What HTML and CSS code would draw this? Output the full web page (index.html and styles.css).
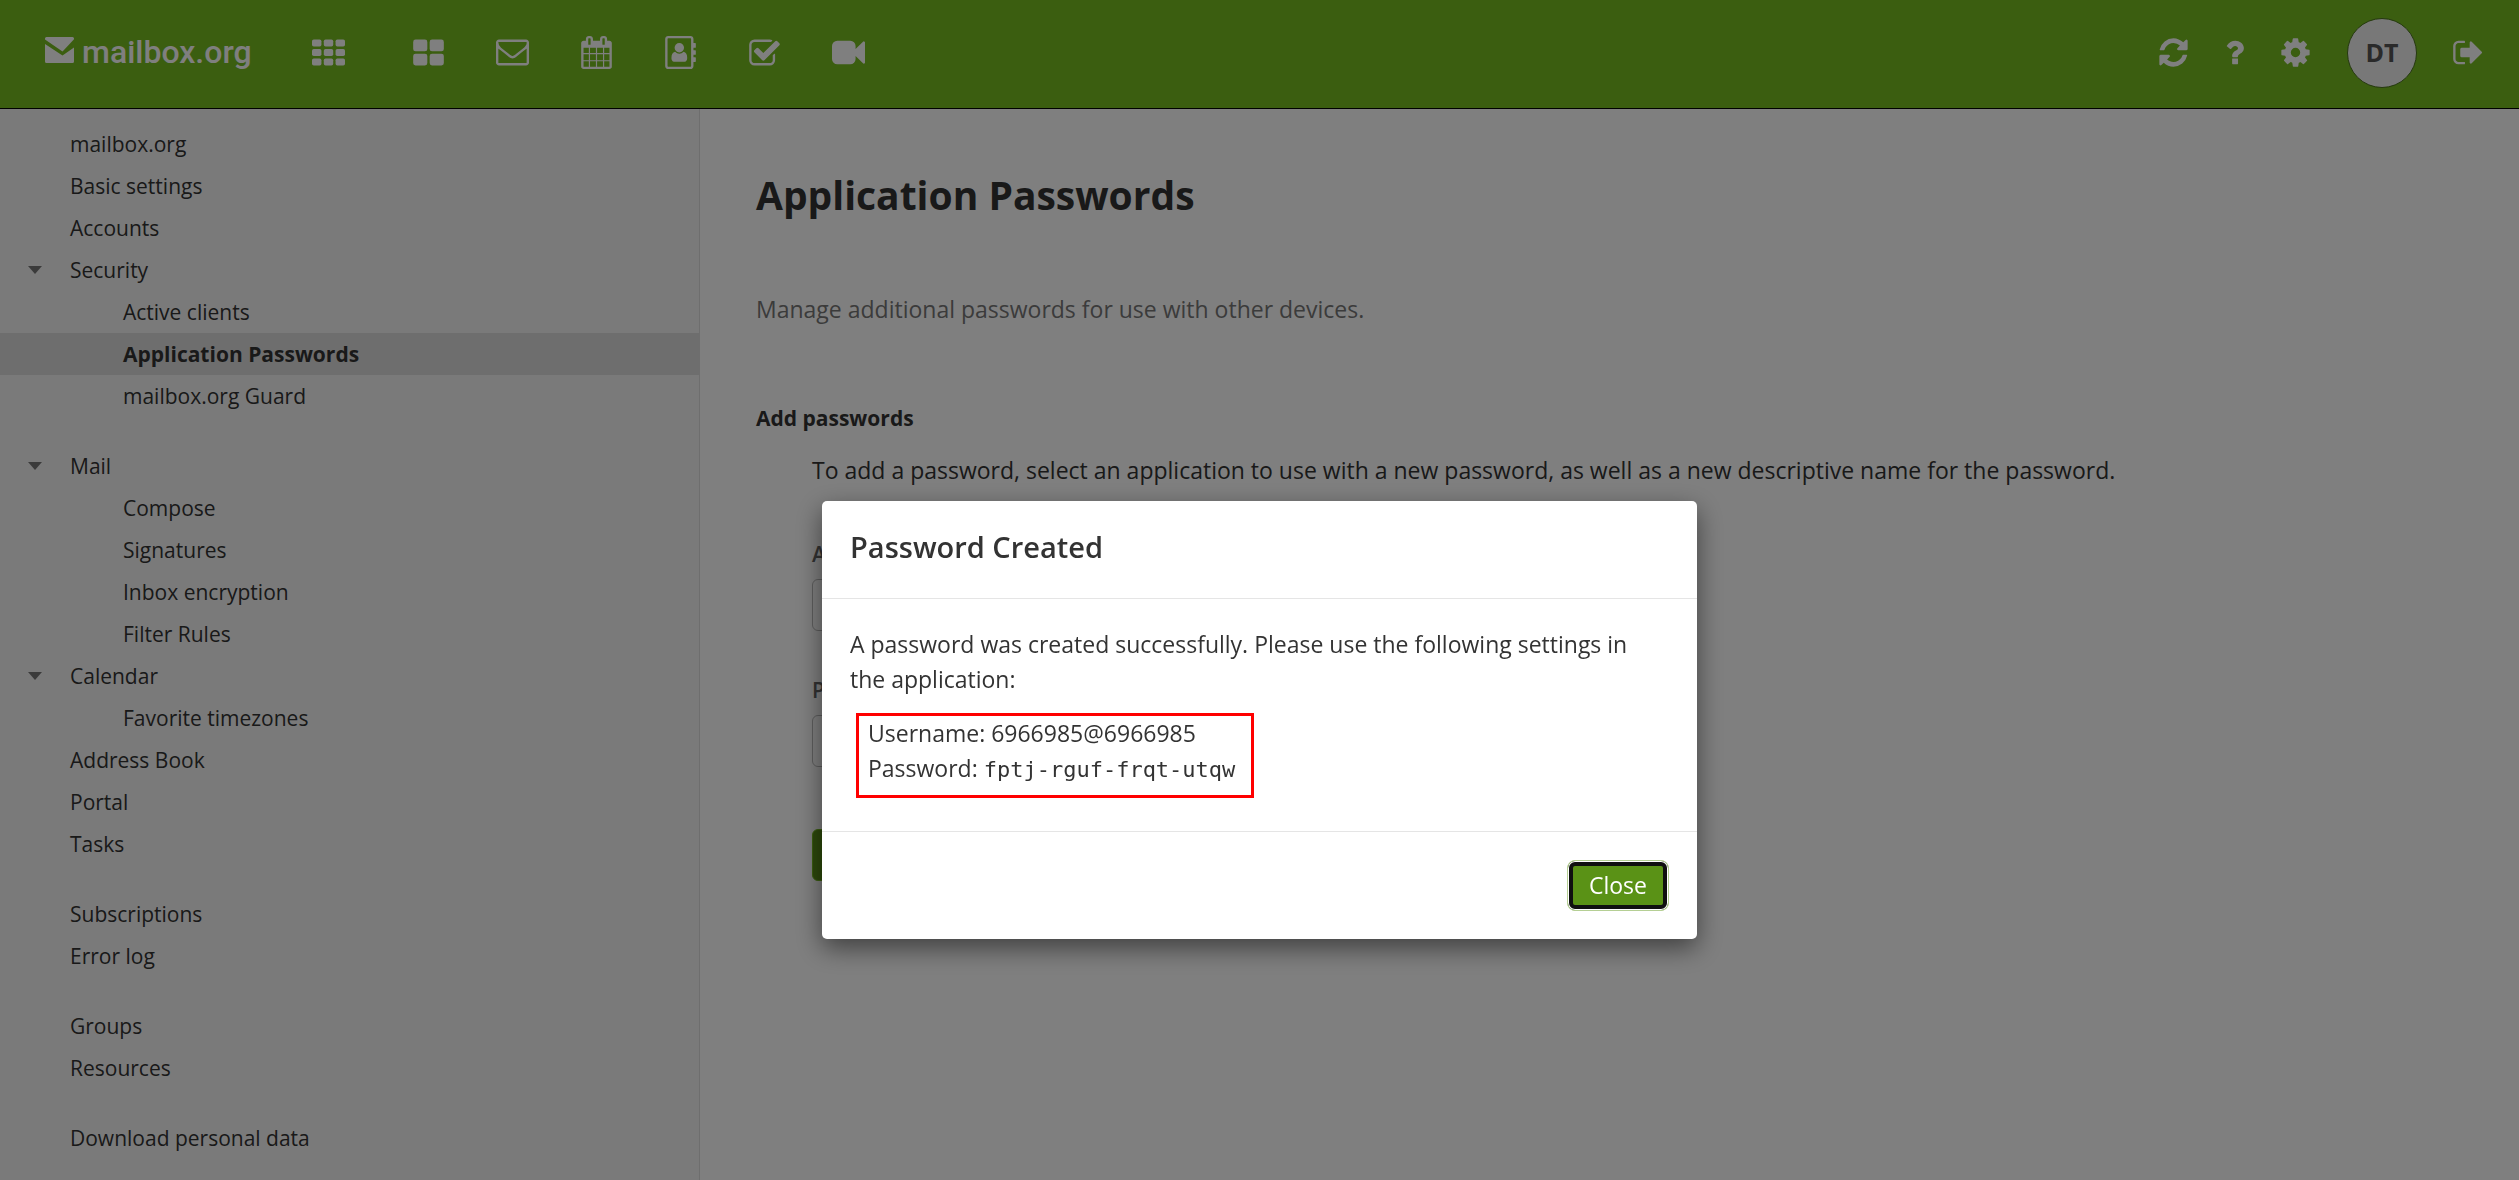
FILE: index.html
```html
<!DOCTYPE html>
<html lang="en">
<head>
	<meta charset="UTF-8">
	<title>mailbox.org - Application Passwords</title>
	<link rel="stylesheet" href="styles.css">
</head>
<body>
	<header class="topbar">
		<a class="logo" href="#">
			<svg class="logo-icon" viewBox="0 0 29 26"><path d="M1.500 0h26q1.500 0 1.500 1.500v.7L17.500 14.500 0 2.500v-1Q0 0 1.500 0z"/><path d="M0 7l17.500 11.500L29 10.500V24.500q0 1.500-1.500 1.500h-26Q0 26 0 24.500z"/></svg>
			<span>mailbox.org</span>
		</a>
		<nav class="apps">
			<button class="icon-btn launcher" aria-label="Apps">
				<svg viewBox="0 0 1792 1792"><rect x="0" y="192" width="512" height="384" rx="96"/><rect x="640" y="192" width="512" height="384" rx="96"/><rect x="1280" y="192" width="512" height="384" rx="96"/><rect x="0" y="704" width="512" height="384" rx="96"/><rect x="640" y="704" width="512" height="384" rx="96"/><rect x="1280" y="704" width="512" height="384" rx="96"/><rect x="0" y="1216" width="512" height="384" rx="96"/><rect x="640" y="1216" width="512" height="384" rx="96"/><rect x="1280" y="1216" width="512" height="384" rx="96"/></svg>
			</button>
			<button class="icon-btn" aria-label="Portal">
				<svg viewBox="0 0 1792 1792"><rect x="64" y="192" width="768" height="640" rx="128"/><rect x="960" y="192" width="768" height="640" rx="128"/><rect x="64" y="960" width="768" height="640" rx="128"/><rect x="960" y="960" width="768" height="640" rx="128"/></svg>
			</button>
			<button class="icon-btn" aria-label="Mail">
				<svg viewBox="0 64 1792 1792"><path d="M1664 1504v-768q-32 36-69 66-268 206-426 338-51 43-83 67t-86.500 48.500-102.500 24.500h-2q-48 0-102.500-24.500t-86.500-48.500-83-67q-158-132-426-338-37-30-69-66v768q0 13 9.500 22.500t22.500 9.500h1472q13 0 22.500-9.500t9.500-22.500zm0-1051v-24.500l-.5-13-3-12.500-5.500-9-9-7.500-14-2.500h-1472q-13 0-22.500 9.500t-9.500 22.500q0 168 147 284 193 152 401 317 6 5 35 29.500t46 37.500 44.500 31.500 50.500 27.500 43 9h2q20 0 43-9t50.500-27.500 44.500-31.500 46-37.500 35-29.500q208-165 401-317 54-43 100.500-115.500t46.500-131.500zm128-37v1088q0 66-47 113t-113 47h-1472q-66 0-113-47t-47-113v-1088q0-66 47-113t113-47h1472q66 0 113 47t47 113z"/></svg>
			</button>
			<button class="icon-btn" aria-label="Calendar">
				<svg viewBox="0 0 1792 1792"><path d="M192 1664h288v-288h-288v288zm352 0h320v-288h-320v288zm-352-352h288v-320h-288v320zm352 0h320v-320h-320v320zm-352-384h288v-288h-288v288zm736 736h320v-288h-320v288zm-384-736h320v-288h-320v288zm768 736h288v-288h-288v288zm-384-352h320v-320h-320v320zm-352-864v-288q0-13-9.500-22.500t-22.500-9.500h-64q-13 0-22.500 9.500t-9.500 22.500v288q0 13 9.500 22.500t22.500 9.500h64q13 0 22.500-9.500t9.500-22.500zm736 864h288v-320h-288v320zm-384-384h320v-288h-320v288zm384 0h288v-288h-288v288zm32-480v-288q0-13-9.500-22.500t-22.500-9.500h-64q-13 0-22.500 9.500t-9.500 22.500v288q0 13 9.500 22.500t22.500 9.500h64q13 0 22.500-9.500t9.500-22.500zm384-64v1280q0 52-38 90t-90 38h-1408q-52 0-90-38t-38-90v-1280q0-52 38-90t90-38h128v-96q0-66 47-113t113-47h64q66 0 113 47t47 113v96h384v-96q0-66 47-113t113-47h64q66 0 113 47t47 113v96h128q52 0 90 38t38 90z"/></svg>
			</button>
			<button class="icon-btn" aria-label="Address Book">
				<svg viewBox="0 0 1792 1792"><path fill-rule="evenodd" d="M224 0h1216q66 0 113 47t47 113v224h96q32 0 32 32v192q0 32-32 32h-96v128h96q32 0 32 32v192q0 32-32 32h-96v128h96q32 0 32 32v192q0 32-32 32h-96v224q0 66-47 113t-113 47H224q-66 0-113-47t-47-113V160q0-66 47-113T224 0zm0 128q-32 0-32 32v1472q0 32 32 32h1216q32 0 32-32V160q0-32-32-32z"/><circle cx="832" cy="640" r="256"/><path d="M600 850q100 110 232 110t232-110q196 40 196 340 0 180-140 210H544q-140-30-140-210 0-300 196-340z"/></svg>
			</button>
			<button class="icon-btn" aria-label="Tasks">
				<svg viewBox="0 -64 1792 1792"><path d="M1472 930v318q0 119-84.500 203.500t-203.500 84.500h-832q-119 0-203.500-84.500t-84.500-203.500v-832q0-119 84.500-203.500t203.500-84.500h832q63 0 117 25 15 7 18 23 3 17-9 29l-49 49q-10 10-23 10-3 0-9-2-23-6-45-6h-832q-66 0-113 47t-47 113v832q0 66 47 113t113 47h832q66 0 113-47t47-113v-254q0-13 9-22l64-64q10-10 23-10 6 0 12 3 20 8 20 29zm231-489l-814 814q-24 24-57 24t-57-24l-430-430q-24-24-24-57t24-57l110-110q24-24 57-24t57 24l263 263 647-647q24-24 57-24t57 24l110 110q24 24 24 57t-24 57z"/></svg>
			</button>
			<button class="icon-btn" aria-label="Video">
				<svg viewBox="0 0 1792 1792"><path d="M1792 352v1088q0 42-39 59-13 5-25 5-27 0-45-19l-403-403v166q0 119-84.500 203.500t-203.500 84.500h-704q-119 0-203.500-84.500t-84.500-203.500v-704q0-119 84.500-203.500t203.500-84.500h704q119 0 203.500 84.500t84.500 203.500v165l403-402q18-19 45-19 12 0 25 5 39 17 39 59z"/></svg>
			</button>
		</nav>
		<div class="tools">
			<button class="icon-btn" aria-label="Refresh">
				<svg viewBox="0 0 1792 1792"><path d="M1639 1056q0 5-1 7-64 268-268 434.500t-478 166.500q-146 0-282.500-55t-243.500-157l-129 129q-19 19-45 19t-45-19-19-45v-448q0-26 19-45t45-19h448q26 0 45 19t19 45-19 45l-137 137q71 66 161 102t187 36q134 0 250-65t186-179q11-17 53-117 8-23 30-23h192q13 0 22.500 9.500t9.500 22.500zm25-800v448q0 26-19 45t-45 19h-448q-26 0-45-19t-19-45 19-45l138-138q-148-137-349-137-134 0-250 65t-186 179q-11 17-53 117-8 23-30 23h-199q-13 0-22.500-9.500t-9.500-22.500v-7q65-268 270-434.500t480-166.500q146 0 284 55.500t245 156.500l130-129q19-19 45-19t45 19 19 45z"/></svg>
			</button>
			<button class="icon-btn" aria-label="Help">
				<svg viewBox="0 0 1792 1792"><path d="M1088 1256v240q0 16-12 28t-28 12h-240q-16 0-28-12t-12-28v-240q0-16 12-28t28-12h240q16 0 28 12t12 28zm316-600q0 54-15.500 101t-35 76.500-55 59.500-57.500 43.500-61 35.500q-41 23-68.500 65t-27.500 67q0 17-12 32.500t-28 15.500h-240q-15 0-25.500-18.500t-10.500-37.500v-45q0-83 65-156.500t143-108.500q59-27 84-56t25-76q0-42-46.500-74t-107.500-32q-65 0-108 29-35 25-107 115-13 16-31 16-12 0-25-8l-164-125q-13-10-15.500-25t5.500-28q160-266 464-266 80 0 161 31t146 83 106 127.500 41 158.500z"/></svg>
			</button>
			<button class="icon-btn" aria-label="Settings">
				<svg viewBox="0 0 1792 1792"><path d="M1152 896q0-106-75-181t-181-75-181 75-75 181 75 181 181 75 181-75 75-181zm512-109v222q0 12-8 23t-20 13l-185 28q-19 54-39 91 35 50 107 138 10 12 10 25t-9 23q-27 37-99 108t-94 71q-12 0-26-9l-138-108q-44 23-91 38-16 136-29 186-7 28-36 28h-222q-14 0-24.500-8.500t-11.500-21.500l-28-184q-49-16-90-37l-141 107q-10 9-25 9-14 0-25-11-126-114-165-168-7-10-7-23 0-12 8-23 15-21 51-66.500t54-70.500q-27-50-41-99l-183-27q-13-2-21-12.500t-8-23.500v-222q0-12 8-23t19-13l186-28q14-46 39-92-40-57-107-138-10-12-10-24 0-10 9-23 26-36 98.500-107.500t94.500-71.500q13 0 26 10l138 107q44-23 91-38 16-136 29-186 7-28 36-28h222q14 0 24.500 8.500t11.500 21.500l28 184q49 16 90 37l142-107q9-9 24-9 13 0 25 10 129 119 165 170 7 8 7 22 0 12-8 23-15 21-51 66.500t-54 70.500q26 50 41 98l183 28q13 2 21 12.500t8 23.500z"/></svg>
			</button>
			<button class="avatar">DT</button>
			<button class="icon-btn" aria-label="Sign out">
				<svg viewBox="0 0 1792 1792"><path d="M704 1440q0 4 1 20t.5 26.500-3 23.500-10 19.500-20.500 6.500h-320q-119 0-203.500-84.500t-84.500-203.500v-704q0-119 84.500-203.500t203.500-84.500h320q13 0 22.500 9.500t9.500 22.500q0 4 1 20t.5 26.500-3 23.500-10 19.500-20.500 6.500h-320q-66 0-113 47t-47 113v704q0 66 47 113t113 47h312l11.500 1 11.500 3 8 5.500 7 9 2 13.500zm928-544q0 26-19 45l-544 544q-19 19-45 19t-45-19-19-45v-288h-448q-26 0-45-19t-19-45v-384q0-26 19-45t45-19h448v-288q0-26 19-45t45-19 45 19l544 544q19 19 19 45z"/></svg>
			</button>
		</div>
	</header>
	<div class="page">
		<nav class="sidebar">
			<ul>
				<li><a href="#">mailbox.org</a></li>
				<li><a href="#">Basic settings</a></li>
				<li><a href="#">Accounts</a></li>
				<li><a class="open" href="#">Security</a></li>
				<li class="sub"><a href="#">Active clients</a></li>
				<li class="sub active"><a href="#">Application Passwords</a></li>
				<li class="sub"><a href="#">mailbox.org Guard</a></li>
			</ul>
			<ul>
				<li><a class="open" href="#">Mail</a></li>
				<li class="sub"><a href="#">Compose</a></li>
				<li class="sub"><a href="#">Signatures</a></li>
				<li class="sub"><a href="#">Inbox encryption</a></li>
				<li class="sub"><a href="#">Filter Rules</a></li>
				<li><a class="open" href="#">Calendar</a></li>
				<li class="sub"><a href="#">Favorite timezones</a></li>
				<li><a href="#">Address Book</a></li>
				<li><a href="#">Portal</a></li>
				<li><a href="#">Tasks</a></li>
			</ul>
			<ul>
				<li><a href="#">Subscriptions</a></li>
				<li><a href="#">Error log</a></li>
			</ul>
			<ul>
				<li><a href="#">Groups</a></li>
				<li><a href="#">Resources</a></li>
			</ul>
			<ul>
				<li><a href="#">Download personal data</a></li>
			</ul>
		</nav>
		<main class="main">
			<h1>Application Passwords</h1>
			<p class="hint">Manage additional passwords for use with other devices.</p>
			<h2>Add passwords</h2>
			<form class="add-form">
				<p>To add a password, select an application to use with a new password, as well as a new descriptive name for the password.</p>
				<label for="app">Application</label>
				<select id="app"></select>
				<label for="name">Password name</label>
				<input id="name" type="text">
				<button class="btn" type="button" aria-label="Add new password"></button>
			</form>
		</main>
	</div>
	<div class="overlay">
		<div class="modal" role="dialog" aria-labelledby="modal-title">
			<div class="modal-header">
				<h3 id="modal-title">Password Created</h3>
			</div>
			<div class="modal-body">
				<p>A password was created successfully. Please use the following settings in the application:</p>
				<div class="credentials">
					<div>Username: 6966985@6966985</div>
					<div>Password: <code>fptj-rguf-frqt-utqw</code></div>
				</div>
			</div>
			<div class="modal-footer">
				<button class="close" type="button">Close</button>
			</div>
		</div>
	</div>
</body>
</html>
```
FILE: styles.css
```css
* {
	box-sizing: border-box;
}
html, body, h1, h2, h3, p, ul, li {
	margin: 0;
	padding: 0;
}
body {
	display: flex;
	flex-direction: column;
	height: 100vh;
	overflow: hidden;
	font-family: "Open Sans", "Noto Sans", sans-serif;
	font-size: 23px;
	line-height: 35px;
	color: #333;
	background: #fff;
}
button, input, select {
	font: inherit;
}
ul {
	list-style: none;
}
a {
	color: inherit;
	text-decoration: none;
}

/* top bar */
.topbar {
	display: flex;
	align-items: center;
	flex: none;
	height: 109px;
	padding: 0 34px 3px 45px;
	background: #76bc21;
	border-bottom: 1px solid #000;
	color: #fff;
}
.logo {
	display: flex;
	align-items: center;
	gap: 8px;
	width: 267px;
	font-family: Roboto, sans-serif;
	font-size: 32px;
	font-weight: 500;
}
.logo-icon {
	width: 29px;
	height: 26px;
	margin-bottom: 6px;
	fill: #fff;
}
.apps {
	display: flex;
	gap: 51px;
}
.icon-btn {
	width: 33px;
	height: 33px;
	padding: 0;
	border: 0;
	background: none;
}
.icon-btn svg {
	display: block;
	width: 33px;
	height: 33px;
	fill: #fff;
}
.launcher {
	margin-right: 16px;
}
.tools {
	display: flex;
	align-items: center;
	gap: 28px;
	margin-left: auto;
}
.avatar {
	width: 70px;
	height: 70px;
	margin: 0 7px;
	padding: 0;
	border: 1px solid #4a721d;
	border-radius: 50%;
	background: #f0f0f0;
	color: #555;
	font-size: 25px;
	font-weight: bold;
}

/* settings page */
.page {
	display: flex;
	flex: 1;
	min-height: 0;
}
.sidebar {
	display: flex;
	flex-direction: column;
	gap: 28px;
	flex: none;
	width: 700px;
	padding-top: 14px;
	background: #f5f5f5;
	border-right: 1px solid #ddd;
	font-size: 21px;
	line-height: 42px;
}
.sidebar a {
	display: flex;
	align-items: center;
	padding-left: 70px;
}
.sidebar .sub a {
	padding-left: 123px;
}
.sidebar .active {
	background: #ddd;
	font-weight: bold;
}
.sidebar .open {
	padding-left: 28px;
}
.sidebar .open::before {
	content: "";
	margin-right: 28px;
	border: 7px solid transparent;
	border-top: 8px solid #777;
	border-bottom: 0;
}
.main {
	flex: 1;
	padding: 56px;
}
.main h1 {
	font-size: 39px;
	line-height: 60px;
}
.main .hint {
	margin-top: 67px;
	color: #777;
}
.main h2 {
	margin-top: 74px;
	font-size: 21px;
	line-height: 34px;
}
.add-form {
	display: flex;
	flex-direction: column;
	align-items: flex-start;
	margin-top: 18px;
	padding-left: 56px;
}
.add-form p {
	margin-bottom: 7px;
}
.add-form label {
	margin-top: 42px;
	color: #666;
	font-size: 21px;
	font-weight: 600;
}
.add-form select, .add-form input {
	width: 700px;
	height: 52px;
	margin-top: 7px;
	border: 1px solid #bbb;
	border-radius: 6px;
	background: #fff;
}
.btn {
	width: 280px;
	height: 52px;
	margin-top: 62px;
	border: 1px solid #76bc21;
	border-radius: 6px;
	background: #5a9216;
}

/* dialog */
.overlay {
	position: fixed;
	inset: 0;
	padding-top: 501px;
	background: rgba(0, 0, 0, .5);
}
.modal {
	width: 875px;
	max-width: 100%;
	margin: 0 auto;
	border-radius: 5px;
	background: #fff;
	box-shadow: 0 9px 26px rgba(0, 0, 0, .5);
}
.modal-header {
	padding: 28px 28px 34px;
	border-bottom: 1px solid #e5e5e5;
}
.modal-header h3 {
	font-size: 29px;
	font-weight: 600;
}
.modal-body {
	padding: 28px 56px 33px 28px;
}
.credentials {
	width: fit-content;
	margin: 16px 0 0 6px;
	padding: 0 16px 9px 9px;
	border: 3px solid #f00;
}
.credentials code {
	font-family: "DejaVu Sans Mono", monospace;
	font-size: 22px;
	line-height: 24px;
}
.modal-footer {
	display: flex;
	justify-content: flex-end;
	padding: 28px;
	border-top: 1px solid #e5e5e5;
}
/* focused state: thin green edge, white gap, black ring */
.close {
	height: 51px;
	padding: 0 21px;
	border: 1px solid #b5cf94;
	border-radius: 8px;
	background: #5a9216;
	box-shadow: inset 0 0 0 1px #fff, inset 0 0 0 5px #101010;
	color: #fff;
}
```
